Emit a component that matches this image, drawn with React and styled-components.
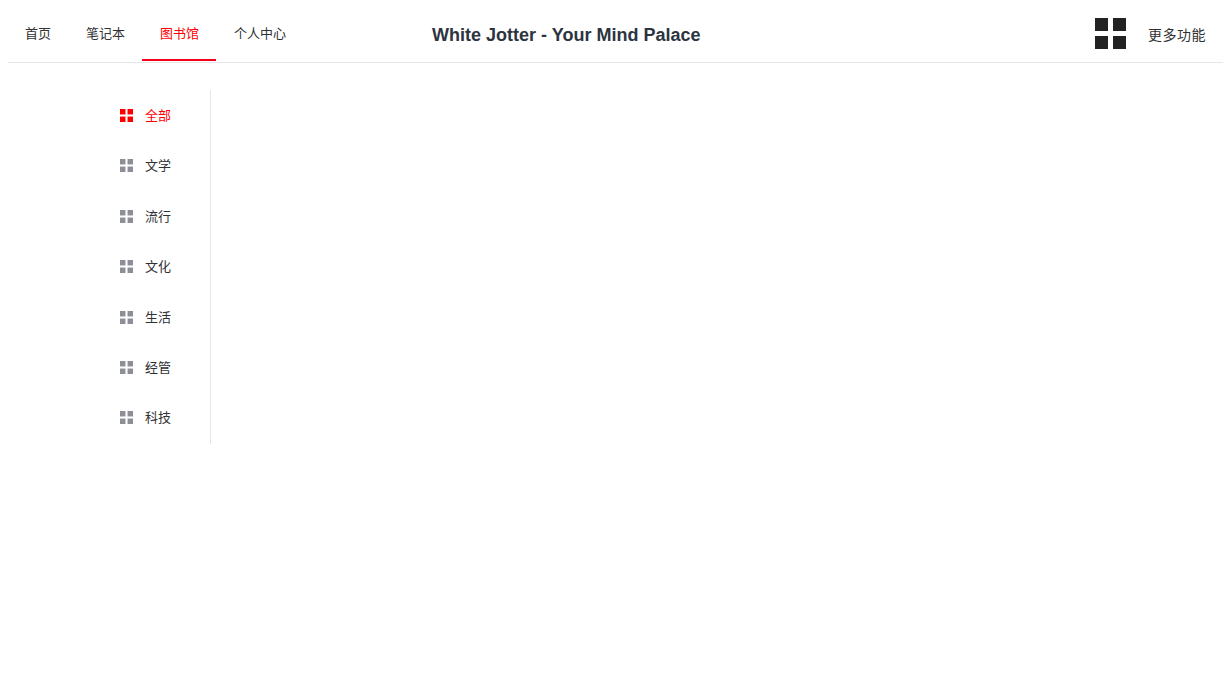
import React from "react";
import styled, { createGlobalStyle } from "styled-components";

const Global = createGlobalStyle`
body {
  margin: 8px;
  background: #fff;
  font-family: "Liberation Sans", "Noto Sans CJK SC", sans-serif;
}
`

const Header = styled.header`
display: flex;
align-items: stretch;
height: 54px;
margin-left: -1px;
margin-right: -1px;
border-bottom: 1px solid #e6e6e6;
`

const Nav = styled.nav`
display: flex;
`

const NavItem = styled.a`
display: flex;
align-items: center;
padding: 0 17px 2px 18px;
height: 53px;
box-sizing: border-box;
font-size: 13px;
color: ${(p) => (p.$active ? "#ff0000" : "#303133")};
border-bottom: 2px solid ${(p) => (p.$active ? "#f5001d" : "transparent")};
`

const Title = styled.span`
margin-left: 129px;
padding-top: 16px;
font-size: 18px;
line-height: 23px;
font-weight: bold;
color: #2c3440;
`

const More = styled.div`
display: flex;
align-items: flex-start;
gap: 22px;
margin-left: auto;
margin-right: 18px;
padding-top: 10px;
font-size: 14px;
color: #303133;
`

const MoreText = styled.span`
padding-top: 7px;
line-height: 20px;
letter-spacing: 0.5px;
`

const Squares = styled.svg`
display: block;
flex: none;
margin-top: ${(p) => p.$shift}px;
`

const GridIcon = ({ size, color, shift = 0 }) => (
  <Squares width={size} height={size} viewBox="0 0 31 31" fill={color} $shift={shift}>
    <rect x="0" y="0" width="13" height="13" />
    <rect x="18" y="0" width="13" height="13" />
    <rect x="0" y="18" width="13" height="13" />
    <rect x="18" y="18" width="13" height="13" />
  </Squares>
)

const Body = styled.div`
display: flex;
padding-top: 27px;
`

const Sidebar = styled.aside`
width: 92px;
margin-left: 110px;
padding-bottom: 1px;
border-right: 1px solid #e6e6e6;
`

const SideItem = styled.div`
display: flex;
align-items: center;
gap: 12px;
box-sizing: border-box;
height: 50.4px;
padding-left: 2px;
padding-bottom: 1.4px;
font-size: 13px;
color: ${(p) => (p.$active ? "#ff0000" : "#303133")};
`

const items = ["全部", "文学", "流行", "文化", "生活", "经管", "科技"]

const App = () => {
  return (
    <>
      <Global />
      <Header>
        <Nav>
          <NavItem>首页</NavItem>
          <NavItem>笔记本</NavItem>
          <NavItem $active>图书馆</NavItem>
          <NavItem>个人中心</NavItem>
        </Nav>
        <Title>White Jotter - Your Mind Palace</Title>
        <More>
          <GridIcon size={31} color="#222222" />
          <MoreText>更多功能</MoreText>
        </More>
      </Header>
      <Body>
        <Sidebar>
          {items.map((item, i) => (
            <SideItem key={item} $active={i === 0}>
              <GridIcon size={13} color={i === 0 ? "#ff0000" : "#8c8f96"} shift={2} />
              {item}
            </SideItem>
          ))}
        </Sidebar>
      </Body>
    </>
  )
}

export default App
